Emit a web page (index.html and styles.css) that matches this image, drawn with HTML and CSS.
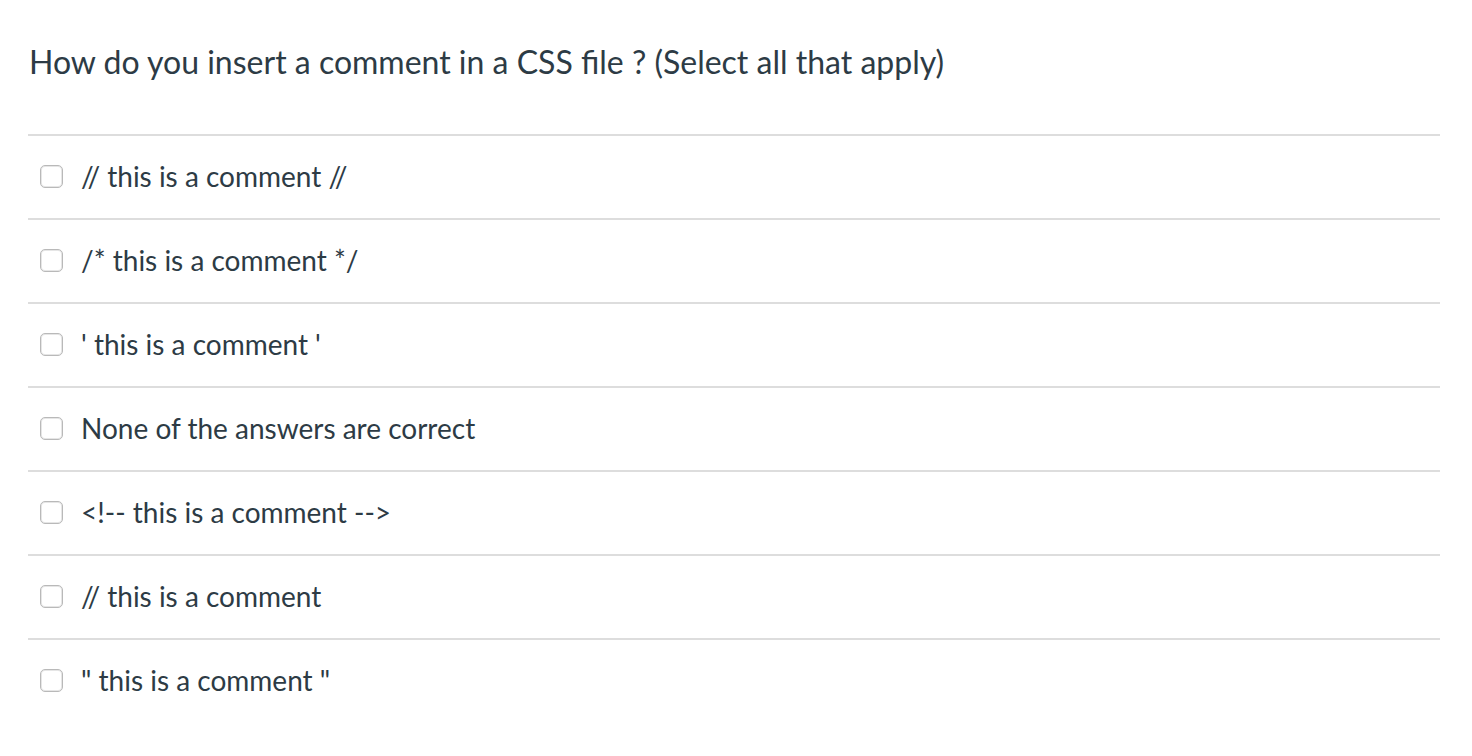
FILE: index.html
```html
<!DOCTYPE html>
<html lang="en">
<head>
<meta charset="utf-8">
<title>Quiz question</title>
<link rel="stylesheet" href="styles.css">
</head>
<body>
<div class="question">
  <div class="question-text">How do you insert a comment in a CSS file ? (Select all that apply)</div>
  <div class="answers">
    <label class="answer"><span class="box"></span><span class="label">// this is a comment //</span></label>
    <label class="answer"><span class="box"></span><span class="label">/* this is a comment */</span></label>
    <label class="answer"><span class="box"></span><span class="label">' this is a comment '</span></label>
    <label class="answer"><span class="box"></span><span class="label">None of the answers are correct</span></label>
    <label class="answer"><span class="box"></span><span class="label">&lt;!-- this is a comment --&gt;</span></label>
    <label class="answer"><span class="box"></span><span class="label">// this is a comment</span></label>
    <label class="answer"><span class="box"></span><span class="label">" this is a comment "</span></label>
  </div>
</div>
</body>
</html>
```

FILE: styles.css
```css
html, body {
  margin: 0;
  padding: 0;
  background: #ffffff;
}
body {
  font-family: Lato, "Open Sans", sans-serif;
  color: #2d3b45;
}
.question {
  width: 1412px;
  margin-left: 28px;
}
.question-text {
  height: 134px;
  box-sizing: border-box;
  padding-top: 42px;
  padding-left: 1px;
  font-size: 32px;
  line-height: 40px;
}
.answers {
  display: flex;
  flex-direction: column;
}
.answer {
  height: 84px;
  box-sizing: border-box;
  border-top: 2px solid #dddddd;
  display: flex;
  align-items: center;
  padding-left: 12px;
  padding-bottom: 2px;
}
.box {
  width: 21px;
  height: 21px;
  border: 1px solid #b9b9b9;
  box-shadow: inset 0 0 0 1px #e6e6e6;
  border-radius: 5px;
  box-sizing: content-box;
  flex: none;
  background: #ffffff;
}
.label {
  margin-left: 18px;
  font-size: 28px;
  line-height: 34px;
}
```
